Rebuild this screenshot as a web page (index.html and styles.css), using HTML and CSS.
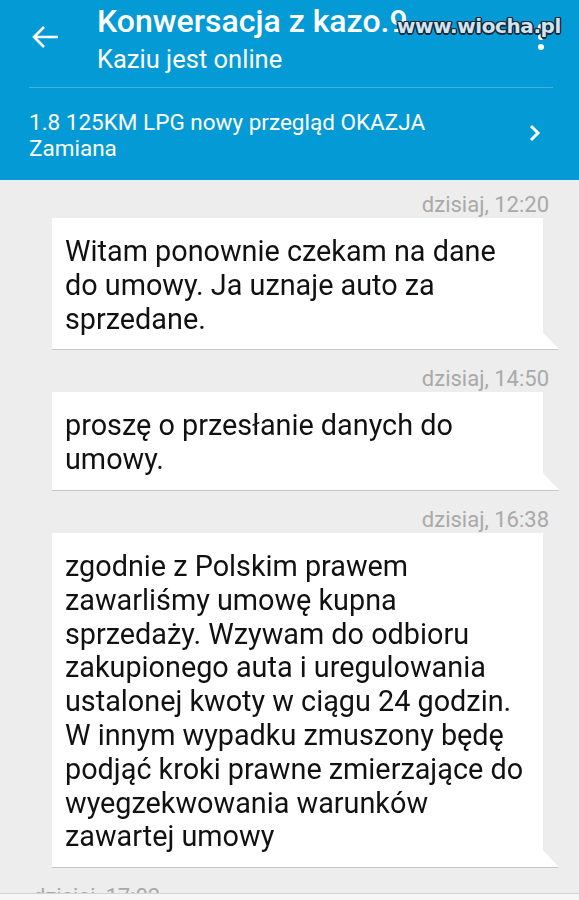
FILE: index.html
```html
<!DOCTYPE html>
<html lang="pl">
  <head>
    <meta charset="UTF-8">
    <meta name="viewport" content="width=device-width, initial-scale=1.0">
    <title>Konwersacja</title>
    <link rel="stylesheet" href="styles.css">
  </head>
  <body>
    <div class="screen">
      <header class="topbar">
        <div class="topbar-main">
          <span class="back">
            <svg width="28" height="24" viewBox="0 0 28 24">
              <path d="M27 12H3M13 2L3 12l10 10" fill="none" stroke="#fff" stroke-width="2.6"/>
            </svg>
          </span>
          <div class="titles">
            <div class="title">Konwersacja z kazo.9</div>
            <div class="subtitle">Kaziu jest online</div>
          </div>
          <span class="kebab"><i></i><i></i><i></i></span>
        </div>
        <div class="listing">
          <p>1.8 125KM LPG nowy przegląd OKAZJA Zamiana</p>
          <svg class="chevron" width="12" height="18" viewBox="0 0 12 18">
            <path d="M2 2l7 7-7 7" fill="none" stroke="#fff" stroke-width="3"/>
          </svg>
        </div>
        <div class="watermark">www.wiocha.pl</div>
      </header>

      <main class="thread">
        <div class="stamp">dzisiaj, 12:20</div>
        <div class="bubble">Witam ponownie czekam na dane do umowy. Ja uznaje auto za sprzedane.</div>

        <div class="stamp">dzisiaj, 14:50</div>
        <div class="bubble">proszę o przesłanie danych do umowy.</div>

        <div class="stamp">dzisiaj, 16:38</div>
        <div class="bubble">zgodnie z Polskim prawem zawarliśmy umowę kupna sprzedaży. Wzywam do odbioru zakupionego auta i uregulowania ustalonej kwoty w ciągu 24 godzin. W innym wypadku zmuszony będę podjąć kroki prawne zmierzające do wyegzekwowania warunków zawartej umowy</div>

        <div class="stamp stamp-left">dzisiaj, 17:02</div>
      </main>

      <footer class="composer"></footer>
    </div>
  </body>
</html>
```

FILE: styles.css
```css
html,
body {
  margin: 0;
  height: 100%;
  font-family: 'Roboto', 'Noto Sans', sans-serif;
  background: #ededed;
}

.screen {
  display: flex;
  flex-direction: column;
  height: 900px;
  overflow: hidden;
}

/* top bar */
.topbar {
  position: relative;
  background: #049ad5;
  color: #fff;
}

.topbar-main {
  display: flex;
  margin: 0 26px 0 29px;
  padding-bottom: 13px;
  border-bottom: 1px solid #45b4e2;
}

.back {
  display: flex;
  margin: 25px 38px 0 2px;
  align-self: flex-start;
}

.titles {
  padding-top: 3px;
}

.title {
  font-size: 32px;
  font-weight: 500;
  line-height: 36px;
  white-space: nowrap;
}

.subtitle {
  margin-top: 5px;
  font-size: 25.5px;
  line-height: 30px;
}

.kebab {
  display: flex;
  flex-direction: column;
  gap: 4px;
  margin: 24px 9px 0 auto;
}

.kebab i {
  width: 6px;
  height: 6px;
  border-radius: 50%;
  background: #fff;
}

.listing {
  display: flex;
  align-items: center;
  justify-content: space-between;
  padding: 21px 38px 19px 29px;
}

.listing p {
  margin: 0;
  max-width: 440px;
  font-size: 22.5px;
  line-height: 26px;
}

.chevron {
  margin-top: -4px;
}

.watermark {
  position: absolute;
  top: 14px;
  left: 397px;
  font-family: 'DejaVu Sans', sans-serif;
  font-weight: bold;
  font-size: 20px;
  letter-spacing: -0.4px;
  color: #cfe5f0;
  text-shadow: 1px 1px 0 #14263a, -1px -1px 0 #14263a, 1px -1px 0 #14263a, -1px 1px 0 #14263a,
    0 1.5px 0 #14263a, 1.5px 0 0 #14263a, 0 -1.5px 0 #14263a, -1.5px 0 0 #14263a;
}

/* messages */
.thread {
  flex: 1;
  overflow: hidden;
  padding: 13px 36px 0 52px;
}

.stamp {
  margin: 18px -6px 1px 0;
  font-size: 22px;
  line-height: 24px;
  color: #a9a9a9;
  text-align: right;
}

.stamp:first-child {
  margin-top: 0;
}

.stamp-left {
  margin-left: -19px;
  text-align: left;
}

.bubble {
  position: relative;
  padding: 17px 18px 13px 13px;
  background: #fff;
  font-size: 28.8px;
  line-height: 33.8px;
  color: #111;
  filter: drop-shadow(0 1px 0.6px rgba(0, 0, 0, 0.16));
}

.bubble::after {
  content: "";
  position: absolute;
  left: 100%;
  bottom: 0;
  width: 16px;
  height: 17px;
  background: #fff;
  clip-path: polygon(0 0, 100% 100%, 0 100%);
}

.composer {
  height: 6px;
  background: #f6f6f6;
  border-top: 1px solid #d4d4d4;
}
```
